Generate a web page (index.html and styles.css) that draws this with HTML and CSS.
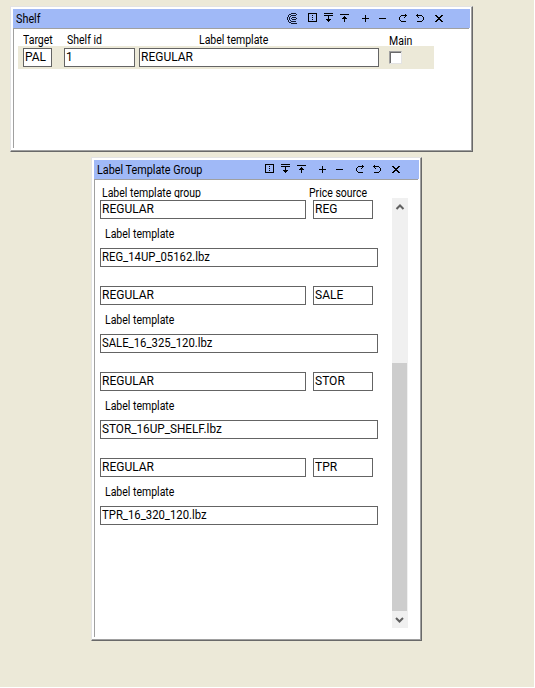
FILE: index.html
```html
<!DOCTYPE html>
<html lang="en">
<head>
<meta charset="utf-8">
<title>Shelf</title>
<link rel="stylesheet" href="styles.css">
</head>
<body>
<svg class="sprite" aria-hidden="true">
  <symbol id="i-spiral" viewBox="0 0 11 11"><path d="M4 0h5v1H4zM2 1h2v1H2zM9 1h1v1H9zM1 2h1v2H1zM4 2h5v1H4zM3 3h1v1H3zM0 4h1v3H0zM2 4h1v3H2zM5 4h4v1H5zM4 5h1v1H4zM9 5h1v1H9zM5 6h4v1H5zM1 7h1v2H1zM3 7h1v1H3zM4 8h5v1H4zM2 9h2v1H2zM4 10h6v1H4z" fill="#101830"/></symbol>
  <symbol id="i-box" viewBox="0 0 9 11"><path d="M.5.5h8v8h-8z" fill="none" stroke="#000"/><path d="M4 2h1v1H4zM4 4h1v1H4zM4 6h1v1H4z"/></symbol>
  <symbol id="i-down" viewBox="0 0 9 11"><path d="M0 0h9v1H0zM0 2h9v1H0zM4 3h1v6H4zM2 6h5v1H2zM3 7h3v1H3z"/></symbol>
  <symbol id="i-up" viewBox="0 0 9 11"><path d="M0 1h9v1H0zM4 3h1v6H4zM3 4h3v1H3zM2 5h5v1H2z"/></symbol>
  <symbol id="i-plus" viewBox="0 0 7 11"><path d="M0 5h7v1H0zM3 2h1v7H3z"/></symbol>
  <symbol id="i-minus" viewBox="0 0 7 11"><path d="M0 5h7v1H0z"/></symbol>
  <symbol id="i-redo" viewBox="0 0 8 11"><path d="M6 1h1v1H6zM2 2h6v1H2zM6 3h1v1H6zM1 3h1v1H1zM0 4h1v3H0zM1 7h1v1H1zM2 8h5v1H2zM5 4h1v1H5z"/></symbol>
  <symbol id="i-undo" viewBox="0 0 8 11"><path d="M1 1h1v1H1zM0 2h6v1H0zM1 3h1v1H1zM6 3h1v1H6zM7 4h1v3H7zM6 7h1v1H6zM1 8h5v1H1zM2 4h1v1H2z"/></symbol>
  <symbol id="i-close" viewBox="0 0 8 11"><path d="M0 2h2v1H0zM6 2h2v1H6zM1 3h2v1H1zM5 3h2v1H5zM2 4h4v1H2zM3 5h2v1H3zM2 6h4v1H2zM1 7h2v1H1zM5 7h2v1H5zM0 8h2v1H0zM6 8h2v1H6z"/></symbol>
</svg>

<section class="window shelf">
  <header class="titlebar">
    <h1 class="title">Shelf</h1>
    <div class="tools">
      <svg class="ic w11"><use href="#i-spiral"/></svg>
      <svg class="ic w9 g10"><use href="#i-box"/></svg>
      <svg class="ic w9 g7"><use href="#i-down"/></svg>
      <svg class="ic w9 g7"><use href="#i-up"/></svg>
      <svg class="ic w7 g13"><use href="#i-plus"/></svg>
      <svg class="ic w7 g10"><use href="#i-minus"/></svg>
      <svg class="ic w8 g13"><use href="#i-redo"/></svg>
      <svg class="ic w8 g9"><use href="#i-undo"/></svg>
      <svg class="ic w8 g11"><use href="#i-close"/></svg>
    </div>
  </header>
  <div class="content">
    <div class="cols heads">
      <span class="label">Target</span><span class="label h-id">Shelf id</span><span class="label h-template">Label template</span><span class="label h-main">Main</span>
    </div>
    <div class="cols record">
      <div class="field"><span class="value">PAL</span></div>
      <div class="field"><span class="value">1</span></div>
      <div class="field"><span class="value">REGULAR</span></div>
      <div class="check"></div>
    </div>
  </div>
</section>

<section class="window group">
  <header class="titlebar">
    <h1 class="title">Label Template Group</h1>
    <div class="tools end">
      <svg class="ic w9"><use href="#i-box"/></svg>
      <svg class="ic w9 g7"><use href="#i-down"/></svg>
      <svg class="ic w9 g7"><use href="#i-up"/></svg>
      <svg class="ic w7 g13"><use href="#i-plus"/></svg>
      <svg class="ic w7 g10"><use href="#i-minus"/></svg>
      <svg class="ic w8 g13"><use href="#i-redo"/></svg>
      <svg class="ic w8 g9"><use href="#i-undo"/></svg>
      <svg class="ic w8 g11"><use href="#i-close"/></svg>
    </div>
  </header>
  <div class="content split">
    <div class="list">
      <div class="group-heads"><span class="label h-group">Label template group</span><span class="label">Price source</span></div>
      <div class="entry">
        <div class="pair"><div class="field"><span class="value">REGULAR</span></div><div class="field"><span class="value">REG</span></div></div>
        <div class="sub"><span class="label">Label template</span></div>
        <div class="field"><span class="value file">REG_14UP_05162.lbz</span></div>
      </div>
      <div class="entry">
        <div class="pair"><div class="field"><span class="value">REGULAR</span></div><div class="field"><span class="value">SALE</span></div></div>
        <div class="sub"><span class="label">Label template</span></div>
        <div class="field"><span class="value file">SALE_16_325_120.lbz</span></div>
      </div>
      <div class="entry">
        <div class="pair"><div class="field"><span class="value">REGULAR</span></div><div class="field"><span class="value">STOR</span></div></div>
        <div class="sub"><span class="label">Label template</span></div>
        <div class="field"><span class="value file wide">STOR_16UP_SHELF.lbz</span></div>
      </div>
      <div class="entry">
        <div class="pair"><div class="field"><span class="value">REGULAR</span></div><div class="field"><span class="value">TPR</span></div></div>
        <div class="sub"><span class="label">Label template</span></div>
        <div class="field"><span class="value file">TPR_16_320_120.lbz</span></div>
      </div>
    </div>
    <div class="scrollbar">
      <svg class="arrow" viewBox="0 0 16 17"><path d="M4.500 11 8 7.500 11.500 11" /></svg>
      <div class="thumb"></div>
      <svg class="arrow" viewBox="0 0 16 17"><path d="M4 7 7.500 10.500 11 7" /></svg>
    </div>
  </div>
</section>
</body>
</html>
```

FILE: styles.css
```css
* { box-sizing: border-box; }
html { background: #fff; }
body {
  margin: 0;
  width: 534px;
  height: 687px;
  overflow: hidden;
  background: #ece9d8;
  color: #000;
  font: 12.5px/14px Roboto, "Liberation Sans", sans-serif;
  display: flow-root;
}
.sprite { display: none; }

.window {
  background: #fff;
  border: 1px solid;
  border-color: #e3e3e3 #696969 #696969 #e3e3e3;
  box-shadow: inset -1px -1px #a0a0a0;
  padding: 2px;
}
.shelf { width: 463px; height: 146px; margin: 6px 0 0 10px; }
.group { width: 331px; height: 484px; margin: 5px 0 0 91px; }

.titlebar {
  display: flex;
  justify-content: space-between;
  height: 19px;
  padding-left: 3px;
  background: #a0b9f7;
}

/* Condensed interface lettering */
.title, .label, .value {
  display: inline-block;
  transform-origin: 0 0;
  white-space: nowrap;
}
.title { margin: 3px 0 0; font: inherit; transform: scaleX(.865); }
.label { transform: scaleX(.84); }
.value { transform: scaleX(.96); }
.value.file { transform: scaleX(.905); }
.value.file.wide { transform: scaleX(.94); }

.tools { display: flex; padding: 4px 27px 0 0; }
.tools.end { padding-right: 19px; }
.ic { height: 11px; flex: none; shape-rendering: crispEdges; }
.w7 { width: 7px; }
.w8 { width: 8px; }
.w9 { width: 9px; }
.w11 { width: 11px; }
.g7 { margin-left: 7px; }
.g9 { margin-left: 9px; }
.g10 { margin-left: 10px; }
.g11 { margin-left: 11px; }
.g13 { margin-left: 13px; }

.content {
  margin-right: 1px;
  border-top: 1px solid #a0a0a0;
  border-left: 1px solid #a0a0a0;
}
.shelf .content { height: 120px; padding: 4px 0 0 4px; }
.cols {
  display: grid;
  grid-template-columns: 29px 79px 240px 13px;
  column-gap: 4px;
  width: 416px;
  padding-left: 5px;
}
.cols > :nth-child(2) { margin-left: 8px; }
.cols > :nth-child(4) { margin-left: 6px; }
.heads { height: 13px; }
.cols > .h-id { margin-left: 11px; }
.h-template { margin-left: 60px; }
.h-main { padding-top: 1px; }
.record { height: 23px; padding-top: 2px; background: #ece9d8; }

.field {
  height: 19px;
  padding: 1px 0 0 1px;
  border: 1px solid #646464;
  background: #fff;
}
.value { display: block; width: max-content; }
.check {
  width: 13px;
  height: 13px;
  margin-top: 3px;
  background: #fff;
  border: 1px solid;
  border-color: #a0a0a0 #e3e3e3 #e3e3e3 #a0a0a0;
  box-shadow: inset 1px 1px #696969;
}

.split { display: flex; height: 458px; }
.list { width: 297px; padding: 6px 0 0 5px; }
.group-heads { display: flex; height: 12px; margin-bottom: 2px; overflow: hidden; padding-left: 2px; }
.h-group { width: 207px; flex: none; }
.entry { height: 86px; width: 278px; }
.pair { display: grid; grid-template-columns: 206px 60px; gap: 7px; }
.sub { display: flex; height: 29px; padding: 8px 0 0 5px; }

.scrollbar {
  display: flex;
  flex-direction: column;
  justify-content: space-between;
  width: 16px;
  height: 430px;
  margin-top: 18px;
  background: #f0f0f0;
}
.arrow { width: 16px; height: 17px; fill: none; stroke: #606060; stroke-width: 2; }
.thumb { width: 15px; height: 248px; margin-top: 148px; background: #cdcdcd; }
```
